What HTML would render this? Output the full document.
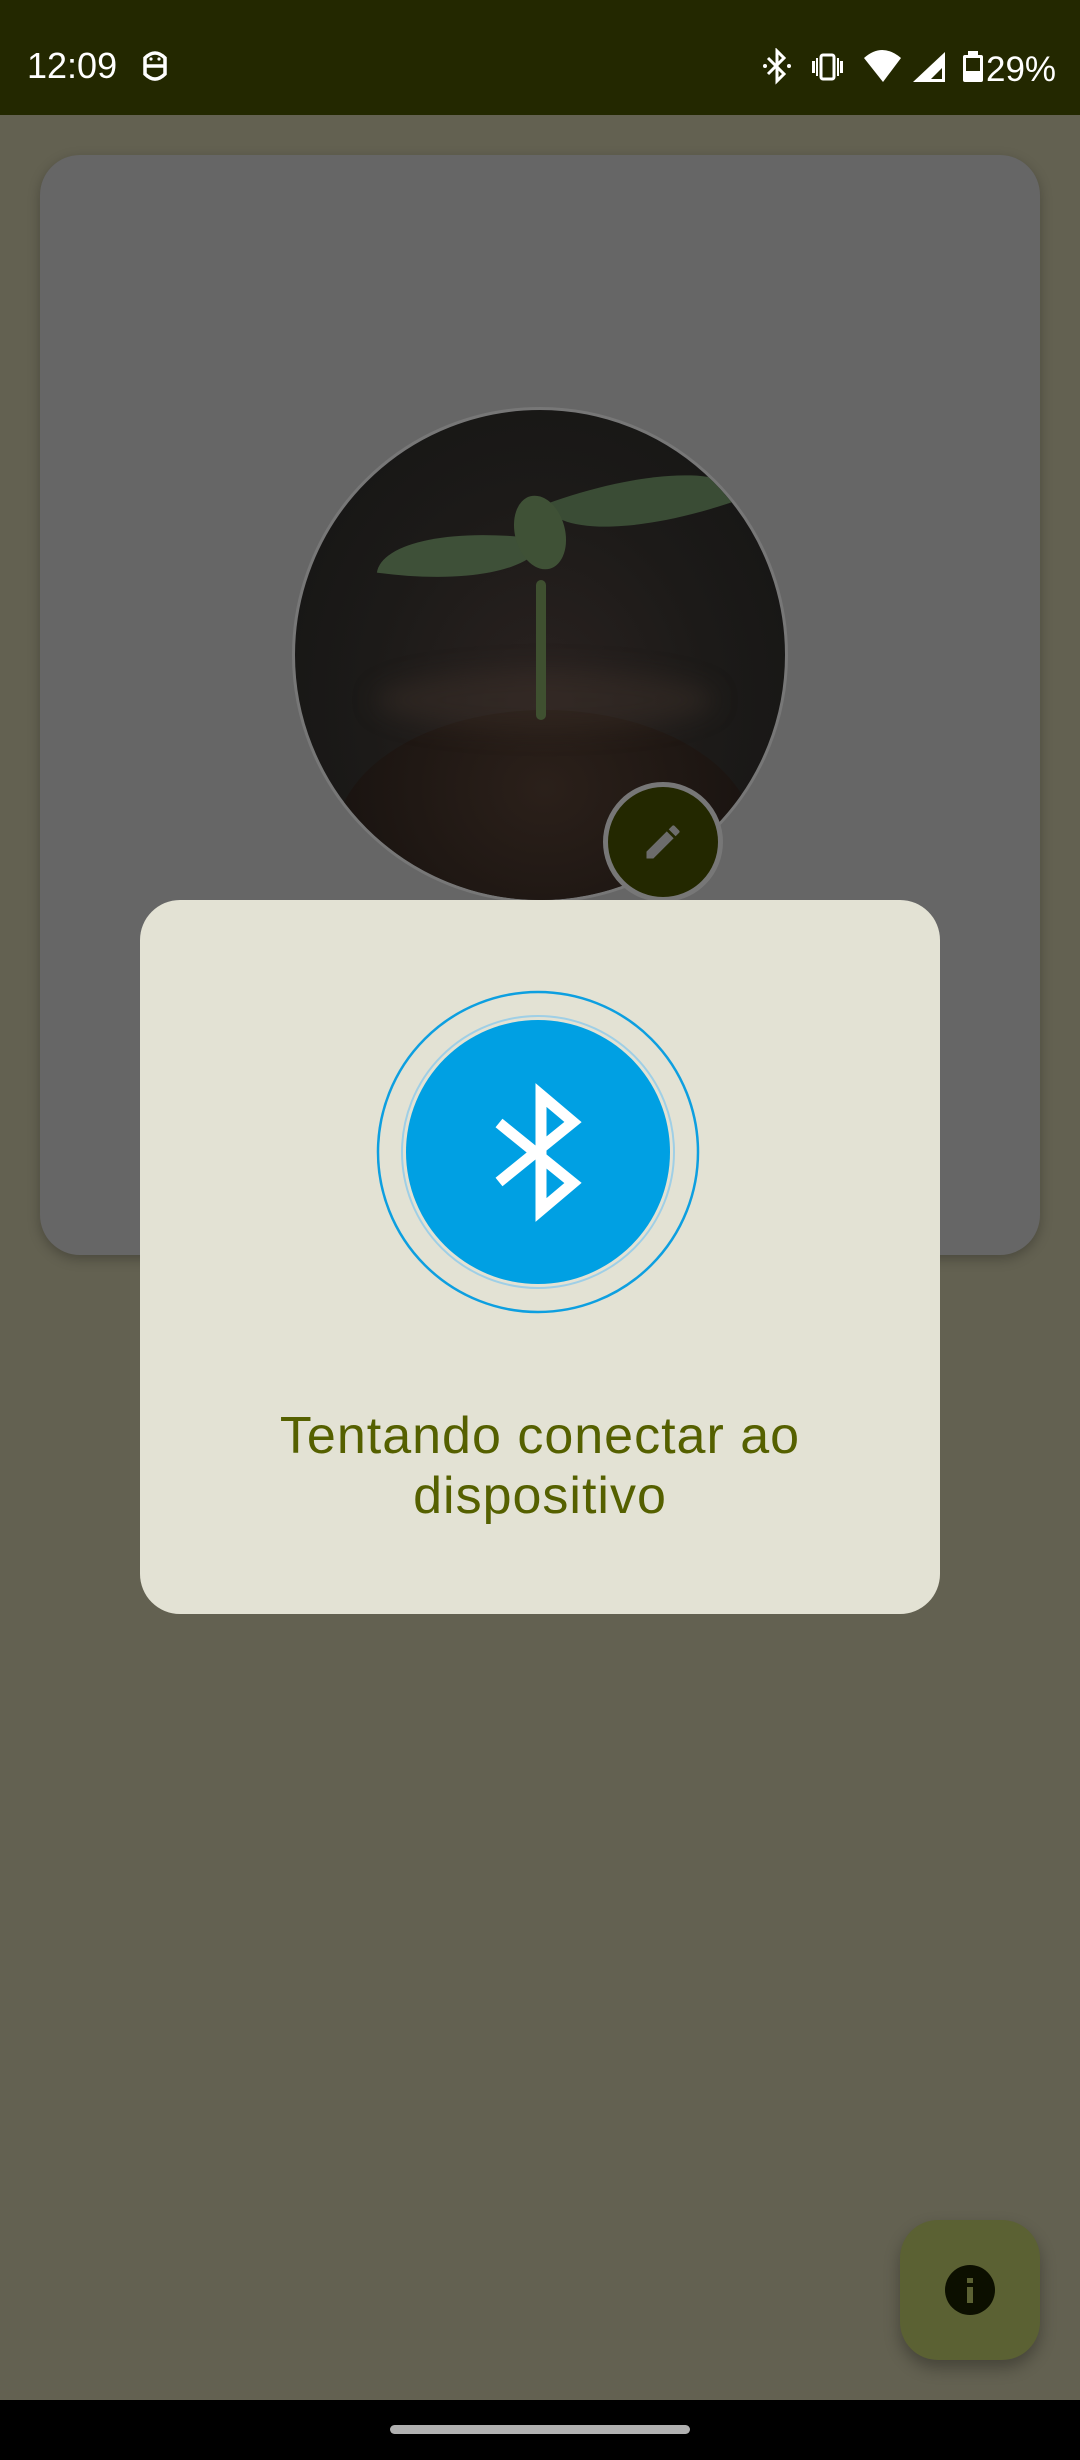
<!DOCTYPE html>
<html><head><meta charset="utf-8">
<style>
*{margin:0;padding:0;box-sizing:border-box}
html,body{width:1080px;height:2460px;overflow:hidden;background:#636151;font-family:"Liberation Sans",sans-serif}
.abs{position:absolute}
#sb{left:0;top:0;width:1080px;height:115px;background:#232800;color:#fff}
#card{left:40px;top:155px;width:1000px;height:1100px;background:#666666;border-radius:40px;box-shadow:0 4px 12px rgba(0,0,0,.25)}
#photo{left:292px;top:407px;width:496px;height:496px;border-radius:50%;overflow:hidden;border:3px solid #777;
background:radial-gradient(ellipse at 50% 60%,#2a2220 0%,#1c1a18 50%,#141414 100%)}
#edit{left:603px;top:782px;width:120px;height:120px;border-radius:50%;background:#232800;border:5px solid #777}
#dlg{left:140px;top:900px;width:800px;height:714px;background:#e3e2d4;border-radius:40px}
#txt{left:140px;top:1406px;width:800px;text-align:center;color:#556000;font-size:52px;line-height:60px;letter-spacing:1px}
#fab{left:900px;top:2220px;width:140px;height:140px;border-radius:38px;background:#5b6133;box-shadow:0 8px 16px rgba(0,0,0,.3)}
#nav{left:0;top:2400px;width:1080px;height:60px;background:#000}
</style></head><body>
<div id="sb" class="abs">
 <div class="abs" style="left:27px;top:44px;font-size:36px;line-height:44px">12:09</div>
 <svg class="abs" style="left:140px;top:48px" width="30" height="36" viewBox="0 0 30 36"><path d="M5 10 Q15 0 25 10 V26 Q15 36 5 26 Z M5 18 H25" fill="none" stroke="#fff" stroke-width="3.5"/><circle cx="11" cy="11" r="1.6" fill="#fff"/><circle cx="19" cy="11" r="1.6" fill="#fff"/></svg>
 <svg class="abs" style="left:760px;top:48px" width="320" height="40" viewBox="760 48 320 40">
  <path d="M768 58 L784 74 L777 81 V51 L784 58 L768 74" fill="none" stroke="#fff" stroke-width="3"/>
  <circle cx="765" cy="66" r="2" fill="#fff"/><circle cx="789" cy="66" r="2" fill="#fff"/>
  <rect x="821" y="55" width="13" height="24" rx="2" fill="none" stroke="#fff" stroke-width="3"/>
  <rect x="812" y="61" width="3" height="12" fill="#fff"/><rect x="840" y="61" width="3" height="12" fill="#fff"/>
  <rect x="816" y="58" width="2" height="18" fill="#fff"/><rect x="837" y="58" width="2" height="18" fill="#fff"/>
  <path d="M864 58 Q882 42 901 58 L883 82 Z" fill="#fff"/>
  <path d="M913 82 L945 52 V82 Z" fill="#fff"/><path d="M931 79 L942 68 V79 Z" fill="#232800"/>
  <rect x="963" y="55" width="20" height="27" rx="2" fill="#fff"/><rect x="968" y="51" width="10" height="5" fill="#fff"/>
  <rect x="966" y="58" width="14" height="13" fill="#232800"/>
  <text x="986" y="81" font-size="35" fill="#fff" font-family="Liberation Sans">29%</text>
 </svg>
</div>
<div id="card" class="abs"></div>
<div id="photo" class="abs">
 <div class="abs" style="left:40px;top:300px;width:420px;height:260px;border-radius:50% 50% 0 0;background:radial-gradient(ellipse at 50% 30%,#2b201a,#120e0c)"></div>
 <div class="abs" style="left:80px;top:260px;width:340px;height:60px;border-radius:50%;background:rgba(70,55,45,.35);filter:blur(12px)"></div>
 <div class="abs" style="left:241px;top:170px;width:10px;height:140px;background:#3f5030;border-radius:5px"></div>
 <div class="abs" style="left:85px;top:118px;width:160px;height:56px;border-radius:100% 0 100% 0;background:#3e5038;transform:rotate(8deg)"></div>
 <div class="abs" style="left:255px;top:60px;width:190px;height:62px;border-radius:0 100% 0 100%;background:#3a4c35;transform:rotate(-20deg)"></div>
 <div class="abs" style="left:220px;top:85px;width:50px;height:75px;border-radius:50%;background:#3f5136;transform:rotate(-15deg)"></div>
</div>
<div id="edit" class="abs">
 <svg class="abs" style="left:33px;top:33px" width="44" height="44" viewBox="0 0 24 24"><path d="M3 17.25V21h3.75L17.81 9.94l-3.75-3.75L3 17.25zM20.71 7.04a1 1 0 0 0 0-1.41l-2.34-2.34a1 1 0 0 0-1.41 0l-1.83 1.830 3.75 3.75 1.83-1.83z" fill="#6c6c6c"/></svg>
</div>
<div id="dlg" class="abs"></div>
<svg class="abs" style="left:370px;top:984px" width="336" height="336" viewBox="0 0 336 336">
 <circle cx="168" cy="168" r="160" fill="none" stroke="#0d9fe0" stroke-width="2.5"/>
 <circle cx="168" cy="168" r="136" fill="none" stroke="#9fcfe6" stroke-width="2"/>
 <circle cx="168" cy="168" r="132" fill="#00a0e3"/>
 <path d="M129 139 L203 199 L171 226 V111 L203 138 L129 198" fill="none" stroke="#fff" stroke-width="11" stroke-linejoin="miter"/>
</svg>
<div id="txt" class="abs">Tentando conectar ao<br>dispositivo</div>
<div id="fab" class="abs">
 <svg class="abs" style="left:45px;top:45px" width="50" height="50" viewBox="0 0 50 50"><circle cx="25" cy="25" r="25" fill="#0c0f00"/><rect x="22" y="13" width="6" height="5" fill="#5b6133"/><rect x="22" y="22" width="6" height="16" fill="#5b6133"/></svg>
</div>
<div id="nav" class="abs"><div class="abs" style="left:390px;top:25px;width:300px;height:9px;border-radius:5px;background:#b0b0b0"></div></div>
</body></html>
